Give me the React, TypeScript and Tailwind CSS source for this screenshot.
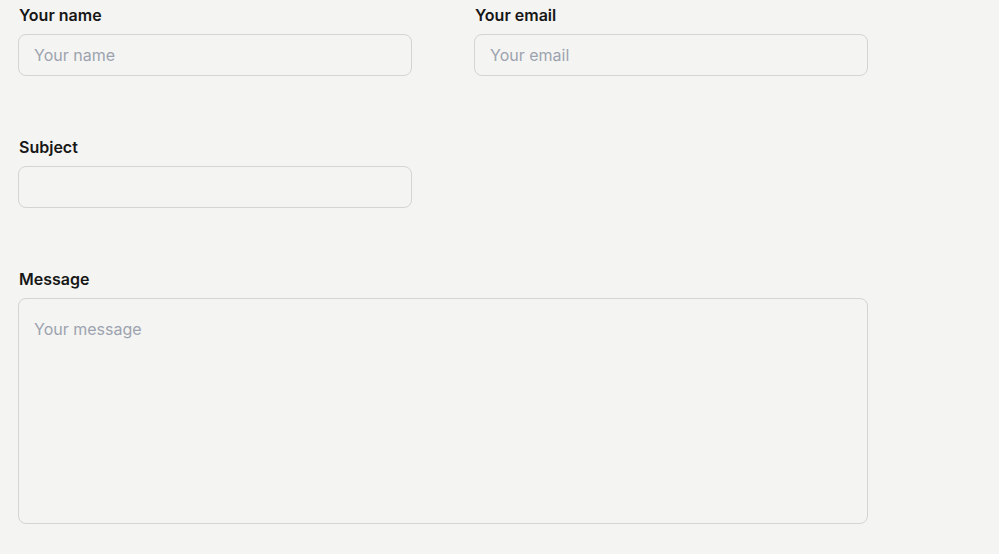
import { type FC } from 'react';

const Field: FC<{ label: string; placeholder?: string; type?: string }> = ({ label, placeholder, type = 'text' }) => (
  <div className="flex flex-col">
    <label className="text-[16px] leading-6 font-semibold text-[#171717] mb-[7px] pl-px">{label}</label>
    <input
      type={type}
      placeholder={placeholder}
      className="h-[42px] w-full rounded-lg border border-[#d4d4d4] bg-transparent px-[15px] text-[16px] text-[#171717] placeholder:text-[#9ca3af] outline-none"
    />
  </div>
);

export default function App() {
  return (
    <div className="min-h-screen w-full bg-[#f4f4f2] pt-[3px] pl-[18px]" style={{ fontFamily: 'Inter, "Noto Sans", sans-serif' }}>
      <form className="w-[850px] flex flex-col gap-[59px]">
        <div className="grid grid-cols-2 gap-x-[62px]">
          <Field label="Your name" placeholder="Your name" />
          <Field label="Your email" placeholder="Your email" type="email" />
        </div>
        <div className="grid grid-cols-2 gap-x-[62px]">
          <Field label="Subject" />
        </div>
        <div className="flex flex-col">
          <label className="text-[16px] leading-6 font-semibold text-[#171717] mb-[7px] pl-px">Message</label>
          <textarea
            placeholder="Your message"
            className="h-[226px] w-full resize-none rounded-lg border border-[#d4d4d4] bg-transparent px-[15px] pt-[18px] text-[16px] leading-6 text-[#171717] placeholder:text-[#9ca3af] outline-none"
          />
        </div>
      </form>
    </div>
  );
}
